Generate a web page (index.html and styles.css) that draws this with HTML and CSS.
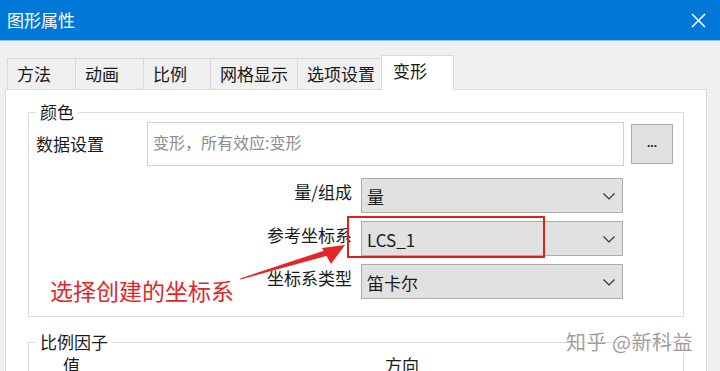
FILE: index.html
```html
<!DOCTYPE html>
<html lang="zh-CN">
<head>
    <meta charset="UTF-8">
    <meta name="viewport" content="width=device-width, initial-scale=1.0">
    <title>图形属性</title>
    <link rel="stylesheet" href="styles.css">
</head>
<body>
    <div class="window">
        <div class="titlebar">
            <span class="title">图形属性</span>
            <svg class="close" width="15" height="15" viewBox="0 0 15 15">
                <path d="M1 1 L14 14 M14 1 L1 14" stroke="#fff" stroke-width="1.6" fill="none"/>
            </svg>
        </div>

        <div class="tabs">
            <div class="tab tab-w69">方法</div>
            <div class="tab tab-w69">动画</div>
            <div class="tab tab-w68">比例</div>
            <div class="tab tab-w88">网格显示</div>
            <div class="tab tab-w85">选项设置</div>
            <div class="tab tab-w73 active">变形</div>
        </div>

        <div class="panel">
            <fieldset class="group">
                <legend>颜色</legend>
                <div class="data-row">
                    <span class="data-label">数据设置</span>
                    <div class="text-field">变形，所有效应:变形</div>
                    <button class="dots">...</button>
                </div>
                <div class="select-row first">
                    <span class="row-label">量/组成</span>
                    <div class="select">
                        <span>量</span>
                        <svg width="12" height="7" viewBox="0 0 12 7"><polyline points="0.5,0.5 6,6 11.5,0.5" fill="none" stroke="#333" stroke-width="1.2"/></svg>
                    </div>
                </div>
                <div class="select-row">
                    <span class="row-label">参考坐标系</span>
                    <div class="select">
                        <span>LCS_1</span>
                        <svg width="12" height="7" viewBox="0 0 12 7"><polyline points="0.5,0.5 6,6 11.5,0.5" fill="none" stroke="#333" stroke-width="1.2"/></svg>
                    </div>
                </div>
                <div class="select-row">
                    <span class="row-label">坐标系类型</span>
                    <div class="select">
                        <span>笛卡尔</span>
                        <svg width="12" height="7" viewBox="0 0 12 7"><polyline points="0.5,0.5 6,6 11.5,0.5" fill="none" stroke="#333" stroke-width="1.2"/></svg>
                    </div>
                </div>
            </fieldset>

            <fieldset class="group scale">
                <legend>比例因子</legend>
                <div class="scale-head">
                    <span class="col-value">值</span>
                    <span class="col-dir">方向</span>
                </div>
            </fieldset>
        </div>

        <!-- annotation drawn over the screenshot -->
        <div class="highlight"></div>
        <div class="note">选择创建的坐标系</div>
        <svg class="arrow" width="720" height="371" viewBox="0 0 720 371">
            <polygon points="240,278.5 326,250 328,255.5 240.5,279.5" fill="#e3262a"/>
            <polygon points="345,245 322,248 331,264" fill="#e3262a"/>
        </svg>
        <div class="watermark">知乎 @新科益</div>
    </div>
</body>
</html>
```

FILE: styles.css
```css
body {
    margin: 0;
    background-color: #f0f0f0;
    font-family: "Noto Sans CJK SC", "Noto Sans", sans-serif;
    font-size: 17px;
    color: #1a1a1a;
    overflow: hidden;
}

.window {
    position: relative;
    width: 720px;
    height: 371px;
    overflow: hidden;
}

.titlebar {
    height: 40px;
    background-color: #0078d7;
    border-bottom: 1px solid #8fc0ee;
    display: flex;
    align-items: center;
    justify-content: space-between;
    padding: 0 14px 0 7px;
}

.title {
    color: white;
    font-size: 17px;
    line-height: 22px;
}

.close {
    display: block;
}

.tabs {
    display: flex;
    align-items: flex-end;
    margin-top: 14px;
    padding-left: 7px;
    height: 34px;
}

.tab {
    box-sizing: border-box;
    height: 31px;
    padding-left: 9px;
    line-height: 29px;
    background-color: #f0f0f0;
    border: 1px solid #d9d9d9;
    border-bottom: none;
    margin-right: -1px;
}

.tab-w69 { width: 69px; }
.tab-w68 { width: 68px; }
.tab-w88 { width: 88px; }
.tab-w85 { width: 85px; }
.tab-w73 { width: 73px; }

.tab.active {
    height: 35px;
    line-height: 30px;
    padding-left: 11px;
    background-color: white;
    position: relative;
    z-index: 1;
    margin-bottom: -1px;
}

.panel {
    margin: 0 13px 0 5px;
    height: 300px;
    background-color: white;
    border: 1px solid #d9d9d9;
    padding: 11px 22px 0 22px;
}

.group {
    margin: 0;
    padding: 0 9px 17px 7px;
    border: 1px solid #dcdcdc;
}

.group legend {
    padding: 0 4px;
    line-height: 22px;
}

.data-row {
    display: flex;
    align-items: center;
    margin-top: -1px;
}

.data-label {
    width: 111px;
    line-height: 22px;
}

.text-field {
    box-sizing: border-box;
    width: 477px;
    height: 44px;
    border: 1px solid #cfcfcf;
    padding: 8px 5px;
    line-height: 22px;
    color: #8c8c8c;
    font-size: 16px;
}

.dots {
    box-sizing: border-box;
    width: 42px;
    height: 40px;
    margin-left: 7px;
    background-color: #e1e1e1;
    border: 1px solid #adadad;
    font-family: "Liberation Sans", sans-serif;
    font-size: 12px;
    font-weight: bold;
    color: #222;
    padding: 0 0 2px;
}

.select-row {
    display: flex;
    align-items: flex-start;
    margin-top: 8px;
}

.select-row.first {
    margin-top: 12px;
}

.row-label {
    width: 316px;
    text-align: right;
    padding-top: 3px;
    line-height: 22px;
    margin-right: 9px;
}

.select {
    box-sizing: border-box;
    width: 262px;
    height: 35px;
    background-color: #e1e1e1;
    border: 1px solid #adadad;
    display: flex;
    align-items: center;
    justify-content: space-between;
    padding: 2px 7px 0 5px;
    line-height: 22px;
}

.group.scale {
    margin-top: 14px;
    height: 60px;
    padding-bottom: 0;
}

.scale-head {
    display: flex;
    line-height: 22px;
    margin-top: 1px;
}

.col-value {
    margin-left: 27px;
    width: 322px;
}

.highlight {
    position: absolute;
    left: 347px;
    top: 216px;
    width: 194px;
    height: 38px;
    border: 2px solid #e0201c;
}

.note {
    position: absolute;
    left: 50px;
    top: 275px;
    font-size: 23px;
    line-height: 30px;
    color: #e3262a;
}

.arrow {
    position: absolute;
    left: 0;
    top: 0;
    pointer-events: none;
}

.watermark {
    position: absolute;
    left: 566px;
    top: 329px;
    font-size: 20px;
    line-height: 26px;
    color: rgba(140, 140, 140, 0.85);
    text-shadow: 0 0 2px #fff, 0 0 1px #fff;
    letter-spacing: 0.5px;
}
```
